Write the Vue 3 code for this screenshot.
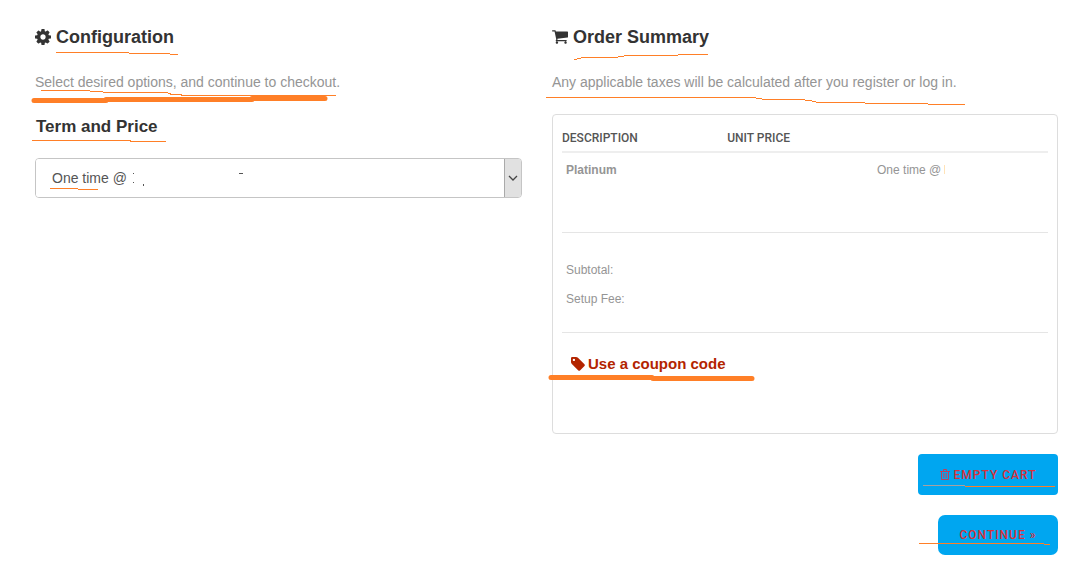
<script setup>
import { ref } from 'vue'

const term = ref('once')
const configMarks = [
  { d: 'M56 52.5H129M129 53.5H170M170 54.5H178', w: 1 },
  { d: 'M41 90.5H90M90 91.5H103M103 92.5H168M168 93.5H171M170 94.5H182M181 95.5H336', w: 1 },
  { d: 'M34 100.5H106M106 99.5H252M252 98.5H325', w: 5, round: true },
  { d: 'M32 140.5H131M130 141.5H166', w: 1 },
  { d: 'M50 188.5H78M78 189.5H98', w: 1 }
]
const summaryMarks = [
  { d: 'M574 59.5H577M577 58.5H581M581 57.5H618M618 56.5H624M624 55.5H678M678 54.5H708', w: 1 },
  { d: 'M546 97.5H756M756 98.5H762M762 99.5H805M805 100.5H812M812 101.5H816M816 102.5H865M865 103.5H928M928 104.5H965', w: 1 },
  { d: 'M551 377.5H652M653 378.5H752', w: 5, round: true }
]
const actionMarks = [
  { d: 'M965 486.5H1055', w: 1 },
  { d: 'M919 543.5H1044M1044 544.5H1050', w: 1 }
]
</script>

<template>
  <main class="page">
    <section class="column">
      <h2>
        <svg class="icon" viewBox="0 128 1536 1536" width="16" height="16" aria-hidden="true"><path fill-rule="evenodd" d="M1024 896q0-106-75-181t-181-75-181 75-75 181 75 181 181 75 181-75 75-181zm512-109v222q0 12-8 23t-20 13l-185 28q-19 54-39 91 35 50 107 138 10 12 10 25t-9 23q-27 37-99 108t-94 71q-12 0-26-9l-138-108q-44 23-91 38-16 136-29 186-7 28-36 28h-222q-14 0-24.5-8.5t-11.5-21.5l-28-184q-49-16-90-37l-141 107q-10 9-25 9-14 0-25-11-126-114-165-168-7-10-7-23 0-12 8-23 15-21 51-66.5t54-70.5q-27-50-41-99l-183-27q-13-2-21-12.5t-8-23.5v-222q0-12 8-23t19-13l186-28q14-46 39-92-40-57-107-138-10-12-10-24 0-10 9-23 26-36 98.5-107.5t94.5-71.5q13 0 26 10l138 107q44-23 91-38 16-136 29-186 7-28 36-28h222q14 0 24.5 8.5t11.5 21.5l28 184q49 16 90 37l142-107q9-9 24-9 13 0 25 10 129 119 165 170 7 8 7 22 0 12-8 23-15 21-51 66.5t-54 70.5q26 50 41 98l183 28q13 2 21 12.5t8 23.5z" /></svg>
        <span>Configuration</span>
      </h2>
      <p class="intro">Select desired options, and continue to checkout.</p>
      <h3><label for="term">Term and Price</label></h3>
      <div class="select-box">
        <select id="term" v-model="term">
          <option value="once">One time @</option>
        </select>
        <span class="arrow"><svg width="10" height="6" viewBox="0 0 10 6" aria-hidden="true"><path d="M1 1L5 5L9 1" /></svg></span>
        <svg class="specks" width="112" height="16" viewBox="0 0 112 16" aria-hidden="true"><path d="M2 2h1v1h-1zM2 11h1v1h-1zM12 13h1v2h-1zM108 2h4v1h-4z" /></svg>
      </div>
      <svg class="marks" viewBox="35 25 487 173" width="487" height="173" aria-hidden="true">
        <path v-for="m in configMarks" :key="m.d" :d="m.d" :stroke-width="m.w" :class="{ round: m.round }" />
      </svg>
    </section>

    <section class="column">
      <h2>
        <svg class="icon" viewBox="64 256 1664 1408" width="16" height="14" aria-hidden="true"><path d="M704 1536q0 52-38 90t-90 38-90-38-38-90 38-90 90-38 90 38 38 90zm896 0q0 52-38 90t-90 38-90-38-38-90 38-90 90-38 90 38 38 90zm128-1088v512q0 24-16.5 42.5t-40.5 21.5l-1044 122q13 60 13 70 0 16-24 64h920q26 0 45 19t19 45-19 45-45 19h-1024q-26 0-45-19t-19-45q0-11 8-31.5t16-36 21.5-40 15.5-29.5l-177-823h-204q-26 0-45-19t-19-45 19-45 45-19h256q16 0 28.5 6.5t19.5 15.5 13 24.5 8 26 5.5 29.5 4.5 26h1201q26 0 45 19t19 45z" /></svg>
        <span>Order Summary</span>
      </h2>
      <p class="intro">Any applicable taxes will be calculated after you register or log in.</p>
      <div class="summary">
        <table>
          <colgroup><col class="c1" /><col class="c2" /><col /></colgroup>
          <thead>
            <tr><th scope="col">Description</th><th scope="col">Unit Price</th><td></td></tr>
          </thead>
          <tbody>
            <tr><td><strong>Platinum</strong></td><td></td><td>One time @<i class="sliver"></i></td></tr>
          </tbody>
        </table>
        <dl class="totals">
          <dt>Subtotal:</dt>
          <dt>Setup Fee:</dt>
        </dl>
        <a class="coupon" href="#">
          <svg class="icon" viewBox="0 128 1536 1536" width="14" height="14" aria-hidden="true"><path fill-rule="evenodd" d="M448 448q0-53-37.500-90.500t-90.500-37.500-90.500 37.500-37.500 90.500 37.500 90.500 90.500 37.500 90.500-37.500 37.500-90.500zm1067 576q0 53-37 90l-491 492q-39 37-91 37-53 0-90-37l-715-716q-38-37-64.500-101t-26.500-117v-416q0-52 38-90t90-38h416q53 0 117 26.500t102 64.500l715 714q37 39 37 91z" /></svg>
          <span>Use a coupon code</span>
        </a>
      </div>
      <div class="actions">
        <button type="button" class="empty">
          <svg width="10" height="11" viewBox="0 0 10 11" aria-hidden="true"><path class="can" d="M0 2.500H10M3.500 2V.5H6.500V2M1.500 3V10.500H8.500V3" /><path class="can ribs" d="M3.500 4V9M5 4V9M6.500 4V9" /></svg>
          <span>Empty Cart</span>
        </button>
        <button type="button">Continue »</button>
        <svg class="marks" viewBox="918 454 140 101" width="140" height="101" aria-hidden="true">
          <path class="faint" d="M923 485.500H965" stroke-width="1" />
          <path v-for="m in actionMarks" :key="m.d" :d="m.d" :stroke-width="m.w" />
        </svg>
      </div>
      <svg class="marks" viewBox="552 25 506 409" width="506" height="409" aria-hidden="true">
        <path v-for="m in summaryMarks" :key="m.d" :d="m.d" :stroke-width="m.w" :class="{ round: m.round }" />
      </svg>
    </section>
  </main>
</template>

<style>
body { background: #fff; }
</style>

<style scoped>
.page {
  display: grid;
  grid-template-columns: 487fr 506fr;
  gap: 30px;
  align-items: start;
  padding: 25px 32px 16px 35px;
  font-family: "Liberation Sans", Arial, sans-serif;
  color: #333;
}
.column { position: relative; min-width: 0; }
.icon { flex: none; fill: currentColor; }
h2 {
  display: flex;
  align-items: center;
  gap: 5px;
  margin: 0;
  font-size: 18px;
  line-height: 24px;
}
.intro {
  margin: 23px 0 0;
  font-size: 14px;
  line-height: 20px;
  color: #959595;
}
h3 {
  margin: 25px 0 0;
  padding-left: 1px;
  font-size: 17px;
  line-height: 20px;
}
.select-box {
  position: relative;
  display: flex;
  margin-top: 21px;
  border: 1px solid #c5c5c5;
  border-radius: 4px;
  overflow: hidden;
}
select {
  flex: 1;
  height: 38px;
  padding: 0 16px;
  border: 0;
  appearance: none;
  background: #fff;
  font: 14px "Liberation Sans", Arial, sans-serif;
  color: #555;
}
.arrow {
  display: flex;
  align-items: center;
  justify-content: center;
  box-sizing: border-box;
  width: 17px;
  padding-right: 1px;
  border-left: 1px solid #aaa;
  background: #e1e1e1;
  pointer-events: none;
}
.arrow path { fill: none; stroke: #444; stroke-width: 1.3; }
.specks { position: absolute; left: 95px; top: 12px; fill: #555; pointer-events: none; }
.summary {
  margin-top: 22px;
  padding: 9px 9px 57px;
  border: 1px solid #ddd;
  border-radius: 4px;
  font-size: 12px;
  line-height: 18px;
  color: #959595;
}
table { width: 100%; table-layout: fixed; border-collapse: separate; border-spacing: 0; }
.c1 { width: 34%; }
.c2 { width: 30%; }
th {
  height: 27px;
  padding: 0;
  border-bottom: 2px solid #eee;
  font-family: Roboto, sans-serif;
  font-weight: 500;
  text-align: left;
  text-transform: uppercase;
  color: #555;
}
thead td { padding: 0; border-bottom: 2px solid #eee; }
tbody td {
  height: 62px;
  padding: 8px 4px 9px;
  border-bottom: 1px solid #e5e5e5;
  vertical-align: top;
}
.sliver { display: inline-block; width: 1px; height: 9px; margin-left: 3px; background: #ffe3b8; }
.totals {
  display: grid;
  gap: 11px;
  margin: 0;
  padding: 28px 4px 24px;
  border-bottom: 1px solid #e5e5e5;
}
.coupon {
  display: inline-flex;
  align-items: center;
  gap: 3px;
  margin: 21px 0 0 9px;
  font-size: 15px;
  font-weight: bold;
  line-height: 20px;
  text-decoration: none;
  color: #b32400;
}
.actions {
  position: relative;
  display: flex;
  flex-direction: column;
  align-items: flex-end;
  gap: 20px;
  width: 140px;
  margin: 20px 0 0 auto;
}
button {
  display: flex;
  align-items: center;
  justify-content: center;
  gap: 4px;
  width: 120px;
  height: 40px;
  padding: 0;
  border: 0;
  border-radius: 7px;
  background: #00a6f0;
  font: 500 12px Roboto, sans-serif;
  letter-spacing: 1px;
  text-transform: uppercase;
  white-space: nowrap;
  color: #d8303a;
}
.empty { width: 140px; height: 41px; border-radius: 4px; }
.can { fill: none; stroke: #c0405a; stroke-width: 1; }
.ribs { stroke: #8f5f88; }
.marks {
  position: absolute;
  left: 0;
  top: 0;
  overflow: visible;
  pointer-events: none;
  fill: none;
  stroke: #ff7f27;
}
.marks path { shape-rendering: crispEdges; }
.marks .round { stroke-linecap: round; shape-rendering: auto; }
.marks .faint { stroke: #a8a0a0; }
</style>
